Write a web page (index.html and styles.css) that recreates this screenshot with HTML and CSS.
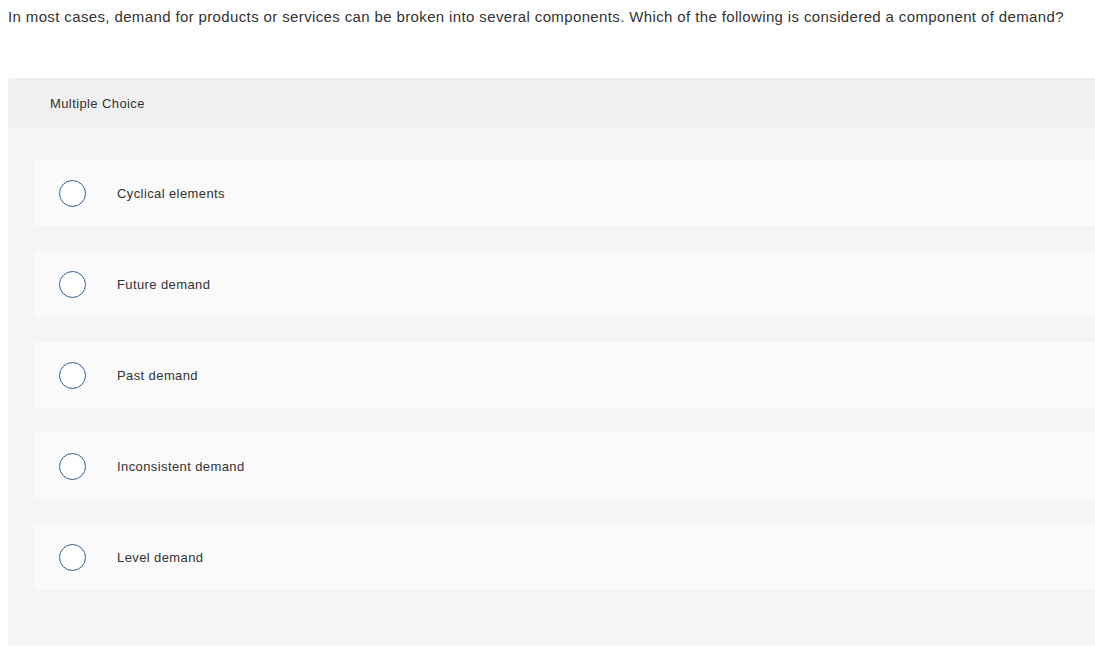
FILE: index.html
```html
<!DOCTYPE html>
<html>
<head>
<meta charset="utf-8">
<link rel="stylesheet" href="styles.css">
</head>
<body>
<p class="question">In most cases, demand for products or services can be broken into several components. Which of the following is considered a component of demand?</p>
<div class="mc">
  <div class="mc-header">Multiple Choice</div>
  <div class="mc-body">
    <div class="option"><span class="radio"></span><span class="label">Cyclical elements</span></div>
    <div class="option"><span class="radio"></span><span class="label">Future demand</span></div>
    <div class="option"><span class="radio"></span><span class="label">Past demand</span></div>
    <div class="option"><span class="radio"></span><span class="label">Inconsistent demand</span></div>
    <div class="option"><span class="radio"></span><span class="label">Level demand</span></div>
  </div>
</div>
</body>
</html>
```
FILE: styles.css
```css
html, body {
  margin: 0;
  padding: 0;
  background: #fff;
  overflow: hidden;
}
body {
  padding-left: 8px;
  font-family: "Liberation Sans", Arial, sans-serif;
  color: #333;
}
.question {
  margin: 0;
  padding-top: 7px;
  font-size: 15px;
  line-height: 20px;
  letter-spacing: 0.37px;
  color: #333;
  white-space: nowrap;
}
.mc {
  margin-top: 51px;
  width: 1095px;
  border-radius: 3px;
  overflow: hidden;
  background: #f5f5f5;
}
.mc-header {
  height: 50px;
  background: #f0f0f0;
  padding-left: 42px;
  display: flex;
  align-items: center;
  font-size: 13px;
  letter-spacing: 0.4px;
  color: #333;
}
.mc-body {
  padding: 32px 0 55px 26px;
  display: flex;
  flex-direction: column;
  gap: 25px;
}
.option {
  height: 66px;
  background: #fafafa;
  border-radius: 3px;
  display: flex;
  align-items: center;
  padding-left: 25px;
}
.radio {
  width: 25px;
  height: 25px;
  border: 1.5px solid #2f5d94;
  border-radius: 50%;
  background: #fff;
  flex: none;
}
.label {
  margin-left: 31px;
  font-size: 13px;
  letter-spacing: 0.4px;
  color: #333;
}
```
